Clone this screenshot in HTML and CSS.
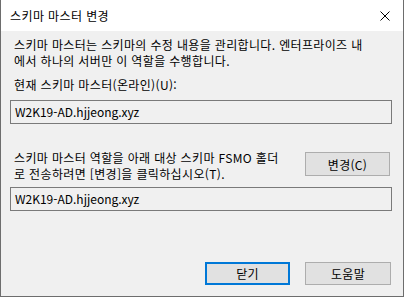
FILE: index.html
```html
<!DOCTYPE html>
<html lang="ko">
<head>
  <meta charset="UTF-8">
  <title>스키마 마스터 변경</title>
  <link rel="stylesheet" href="styles.css">
</head>
<body>
  <div class="window">
    <div class="titlebar">
      <span class="title">스키마 마스터 변경</span>
      <svg class="close" width="10" height="10" viewBox="0 0 10 10">
        <path d="M0.5 0.5 L9.5 9.5 M9.5 0.5 L0.5 9.5" stroke="#000" stroke-width="1" fill="none"/>
      </svg>
    </div>
    <div class="content">
      <p class="text intro">스키마 마스터는 스키마의 수정 내용을 관리합니다. 엔터프라이즈 내<br>에서 하나의 서버만 이 역할을 수행합니다.</p>
      <p class="text label">현재 스키마 마스터(온라인)(U):</p>
      <div class="field">W2K19-AD.hjjeong.xyz</div>

      <div class="row">
        <p class="text">스키마 마스터 역할을 아래 대상 스키마 FSMO 홀더<br>로 전송하려면 [변경]을 클릭하십시오(T).</p>
        <button class="btn change">변경(C)</button>
      </div>
      <div class="field second">W2K19-AD.hjjeong.xyz</div>

      <div class="footer">
        <button class="btn default">닫기</button>
        <button class="btn help">도움말</button>
      </div>
    </div>
  </div>
</body>
</html>
```

FILE: styles.css
```css
body {
  margin: 0;
  background: #fff;
  font-family: "Noto Sans CJK KR", "Noto Sans", sans-serif;
  font-size: 12px;
  color: #000;
}
.window {
  width: 402px;
  height: 296px;
  background: #f0f0f0;
  border: 1px solid #6d6d6d;
  border-top: none;
  display: flex;
  flex-direction: column;
}
.titlebar {
  height: 31px;
  background: #fff;
  display: flex;
  align-items: center;
  justify-content: space-between;
  padding: 0 13px 0 9px;
}
.title {
  line-height: 16px;
  letter-spacing: 0.4px;
}
.content {
  padding: 6px 11px 0 9px;
}
.text {
  margin: 0 0 0 4px;
  line-height: 16px;
  white-space: nowrap;
  letter-spacing: 0.35px;
}
.label {
  margin-top: 8px;
}
.field {
  margin-top: 7px;
  height: 24px;
  box-sizing: border-box;
  border: 1px solid #7a7a7a;
  padding: 0 4px;
  line-height: 22px;
}
.field.second {
  margin-top: 5px;
}
.row {
  margin-top: 26px;
  display: flex;
  justify-content: space-between;
  align-items: flex-start;
}
.btn {
  font-family: inherit;
  font-size: 12px;
  letter-spacing: 0.3px;
  color: #000;
  background: #e1e1e1;
  border: 1px solid #adadad;
  box-sizing: border-box;
  height: 23px;
  padding: 0;
  margin: 0;
}
.change {
  width: 85px;
  height: 24px;
  margin: 2px 2px 0 0;
}
.footer {
  margin-top: 51px;
  display: flex;
  justify-content: flex-end;
  gap: 15px;
  padding-right: 1px;
}
.default {
  width: 85px;
  border: 2px solid #0078d7;
}
.help {
  width: 86px;
}
```
